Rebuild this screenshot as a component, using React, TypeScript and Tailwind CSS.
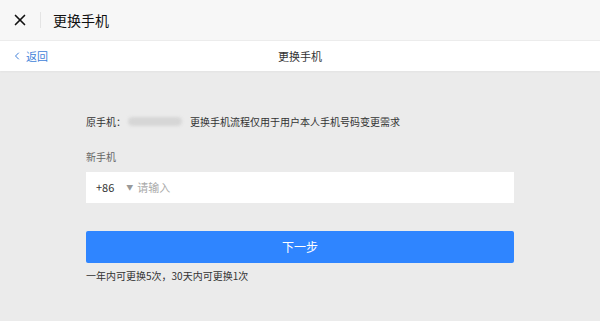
import { X, ChevronLeft } from "lucide-react";

const font = { fontFamily: '"Noto Sans CJK SC", "Liberation Sans", sans-serif' };

export default function App() {
  return (
    <div className="w-[600px] h-[321px] flex flex-col bg-[#ebebeb] overflow-hidden" style={font}>
      {/* top bar */}
      <div className="h-[41px] flex items-center bg-[#f7f7f7] border-b border-[#ececec] shrink-0">
        <div className="w-[40px] flex items-center justify-center">
          <X className="w-[18px] h-[18px] text-[#111]" strokeWidth={2.2} />
        </div>
        <div className="w-px h-[16px] bg-[#e4e4e4]" />
        <span className="ml-[12px] text-[14px] text-[#111]">更换手机</span>
      </div>

      {/* nav */}
      <div className="h-[30px] relative flex items-center justify-center bg-white shrink-0 shadow-[0_1px_2px_rgba(0,0,0,0.04)]">
        <div className="absolute left-[11px] top-0 h-full flex items-center gap-[3px] text-[#3f7fd9]">
          <ChevronLeft className="w-[12px] h-[12px]" strokeWidth={2} />
          <span className="text-[11px]">返回</span>
        </div>
        <span className="text-[11px] text-[#333]">更换手机</span>
      </div>

      {/* body */}
      <div className="flex-1 px-[86px] pt-[41px]">
        <div className="flex items-center h-[18px] text-[10px] text-[#333]">
          <span>原手机：</span>
          <span className="ml-[2px] w-[54px] h-[9px] rounded-full bg-[#d6d6d6] blur-[1.5px]" />
          <span className="ml-[8px]">更换手机流程仅用于用户本人手机号码变更需求</span>
        </div>

        <div className="mt-[18px] text-[10px] text-[#666] h-[16px] flex items-center">新手机</div>

        <div className="mt-[8px] h-[31px] bg-white flex items-center px-[10px] text-[11px]">
          <span className="text-[#333]">+86</span>
          <span className="ml-[12px] text-[7px] text-[#999]">▼</span>
          <span className="ml-[4px] text-[#aaa]">请输入</span>
        </div>

        <button className="mt-[28px] w-full h-[32px] bg-[#2f85ff] rounded-[2px] text-white text-[12px]">
          下一步
        </button>

        <div className="mt-[5px] text-[10px] text-[#333]">一年内可更换5次，30天内可更换1次</div>
      </div>
    </div>
  );
}
